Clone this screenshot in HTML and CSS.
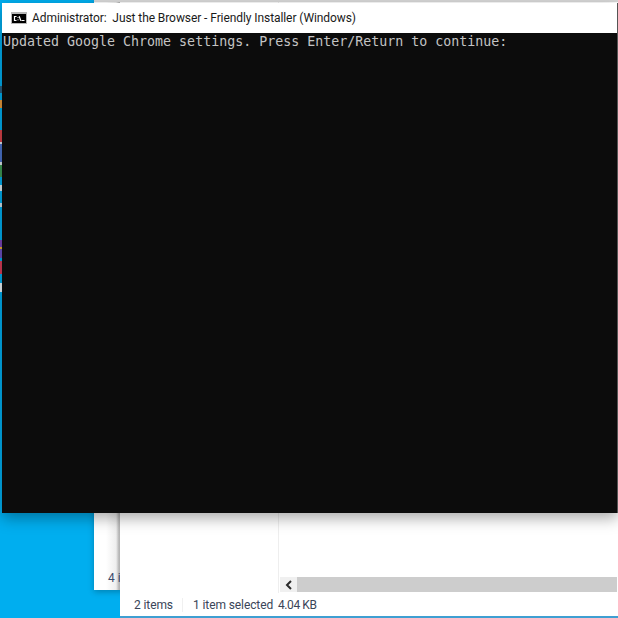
FILE: index.html
```html
<!DOCTYPE html>
<html lang="en">
<head>
<meta charset="utf-8">
<title>Just the Browser - Friendly Installer (Windows)</title>
<link rel="stylesheet" href="styles.css">
</head>
<body>
<main class="desktop">
  <div class="icon-strip"></div>

  <section class="window back-window">
    <div class="back-status">4 items</div>
  </section>

  <section class="window explorer">
    <div class="explorer-main">
      <div class="nav-pane"></div>
      <div class="file-pane">
        <div class="file-list"></div>
        <div class="hscroll">
          <div class="hscroll-btn">
            <svg class="chevron" viewBox="0 0 8 10" width="8" height="10"><path d="M6 1 L2 5 L6 9" fill="none" stroke="#2b2b2b" stroke-width="2"/></svg>
          </div>
          <div class="hscroll-thumb"></div>
        </div>
      </div>
    </div>
    <footer class="statusbar">
      <span class="st-count">2 items</span>
      <span class="st-sel">1 item selected</span>
      <span class="st-size">4.04 KB</span>
    </footer>
  </section>

  <section class="window console">
    <header class="titlebar">
      <svg class="cmd-icon" viewBox="0 0 16 12" width="16" height="12">
        <rect x="0" y="0" width="16" height="12" fill="#b8b8b8"/>
        <rect x="1" y="2" width="14" height="9" fill="#000000"/>
        <path d="M5.5 4.5H3.5V8.5H5.5M7 5V5.8M7 7.4V8.2M8.2 4.2L9.8 8.8M10.5 8.5H13.5" fill="none" stroke="#ffffff" stroke-width="1.2"/>
      </svg>
      <span class="title-text">Administrator:&nbsp; Just the Browser - Friendly Installer (Windows)</span>
    </header>
    <div class="console-body">Updated Google Chrome settings. Press Enter/Return to continue:</div>
  </section>
</main>
</body>
</html>
```
FILE: styles.css
```css
html, body {
  margin: 0;
  padding: 0;
  overflow: hidden;
}

.desktop {
  position: relative;
  width: 618px;
  height: 618px;
  overflow: hidden;
  background: #00aeef;
  font-family: Roboto, "Open Sans", sans-serif;
}

.icon-strip {
  position: absolute;
  left: 0;
  top: 86px;
  width: 2px;
  height: 210px;
  background: linear-gradient(to bottom,
    #2a5f80 0 7px, #00aeef 7px 14px, #e89a3c 14px 22px, #00aeef 22px 44px,
    #d8434a 44px 56px, #dfe8ee 56px 58px, #4b74cc 58px 76px, #dfe8ee 76px 79px,
    #3f9a55 79px 91px, #00aeef 91px 99px, #dfeaf0 99px 105px, #00aeef 105px 117px,
    #cfe2ec 117px 121px, #00aeef 121px 154px, #7a45b8 154px 161px, #e8b030 161px 163px,
    #6a50c0 163px 172px, #00aeef 172px 175px, #d83c58 175px 188px, #00aeef 188px 197px,
    #eef4f8 197px 206px, #00aeef 206px 210px);
}

.window {
  position: absolute;
  box-sizing: border-box;
}

.back-window {
  left: 94px;
  top: 0;
  width: 40px;
  height: 590px;
  background: linear-gradient(to right, #ffffff 0 12px, #eeeeee 22px, #b5b5b5 25px, #b5b5b5 26px);
  border-top: 2px solid #d8d8d8;
  box-shadow: 0 2px 6px rgba(0, 0, 0, 0.25);
}

.back-status {
  position: absolute;
  left: 14px;
  top: 568px;
  font-size: 12px;
  line-height: 16px;
  color: #3b4a6b;
  white-space: nowrap;
}

.explorer {
  left: 120px;
  top: 0;
  width: 498px;
  height: 618px;
  display: flex;
  flex-direction: column;
  background: #ffffff;
  border-top: 2px solid #d8d8d8;
  border-bottom: 2px solid #3f9fd2;
}

.explorer-main {
  flex: 1;
  display: flex;
  min-height: 0;
}

.nav-pane {
  width: 158px;
  flex: none;
  border-right: 1px solid #eeeeee;
}

.file-pane {
  flex: 1;
  display: flex;
  flex-direction: column;
  min-width: 0;
}

.file-list {
  flex: 1;
}

.hscroll {
  height: 15px;
  display: flex;
  margin: 0 1px 1px;
}

.hscroll-btn {
  width: 17px;
  flex: none;
  display: flex;
  align-items: center;
  justify-content: center;
  background: #f0f0f0;
}

.hscroll-thumb {
  flex: 1;
  background: #cdcdcd;
}

.statusbar {
  height: 23px;
  flex: none;
  display: flex;
  align-items: center;
  padding-left: 14px;
  font-size: 12px;
  letter-spacing: -0.1px;
  color: #3a4558;
  white-space: nowrap;
}

.st-count {
  width: 49px;
  flex: none;
  box-sizing: border-box;
  border-right: 1px solid #f0f0f0;
}

.st-sel {
  margin-left: 10px;
  width: 85px;
  flex: none;
}

.st-size {
  letter-spacing: -0.4px;
}

.console {
  left: 2px;
  top: 3px;
  width: 616px;
  height: 510px;
  display: flex;
  flex-direction: column;
  box-shadow: 0 5px 14px rgba(0, 0, 0, 0.34);
  border-right: 1px solid #555555;
}

.titlebar {
  height: 30px;
  flex: none;
  display: flex;
  align-items: center;
  gap: 5px;
  padding-left: 9px;
  background: #ffffff;
}

.cmd-icon {
  flex: none;
}

.title-text {
  font-size: 12px;
  letter-spacing: -0.08px;
  color: #1a1a1a;
  white-space: nowrap;
}

.console-body {
  flex: 1;
  background: #0c0c0c;
  color: #c4c4c4;
  font-family: "DejaVu Sans Mono", "Liberation Mono", monospace;
  font-size: 13.3px;
  line-height: 16px;
  padding: 1px 0 0 1px;
  white-space: pre;
}
```
